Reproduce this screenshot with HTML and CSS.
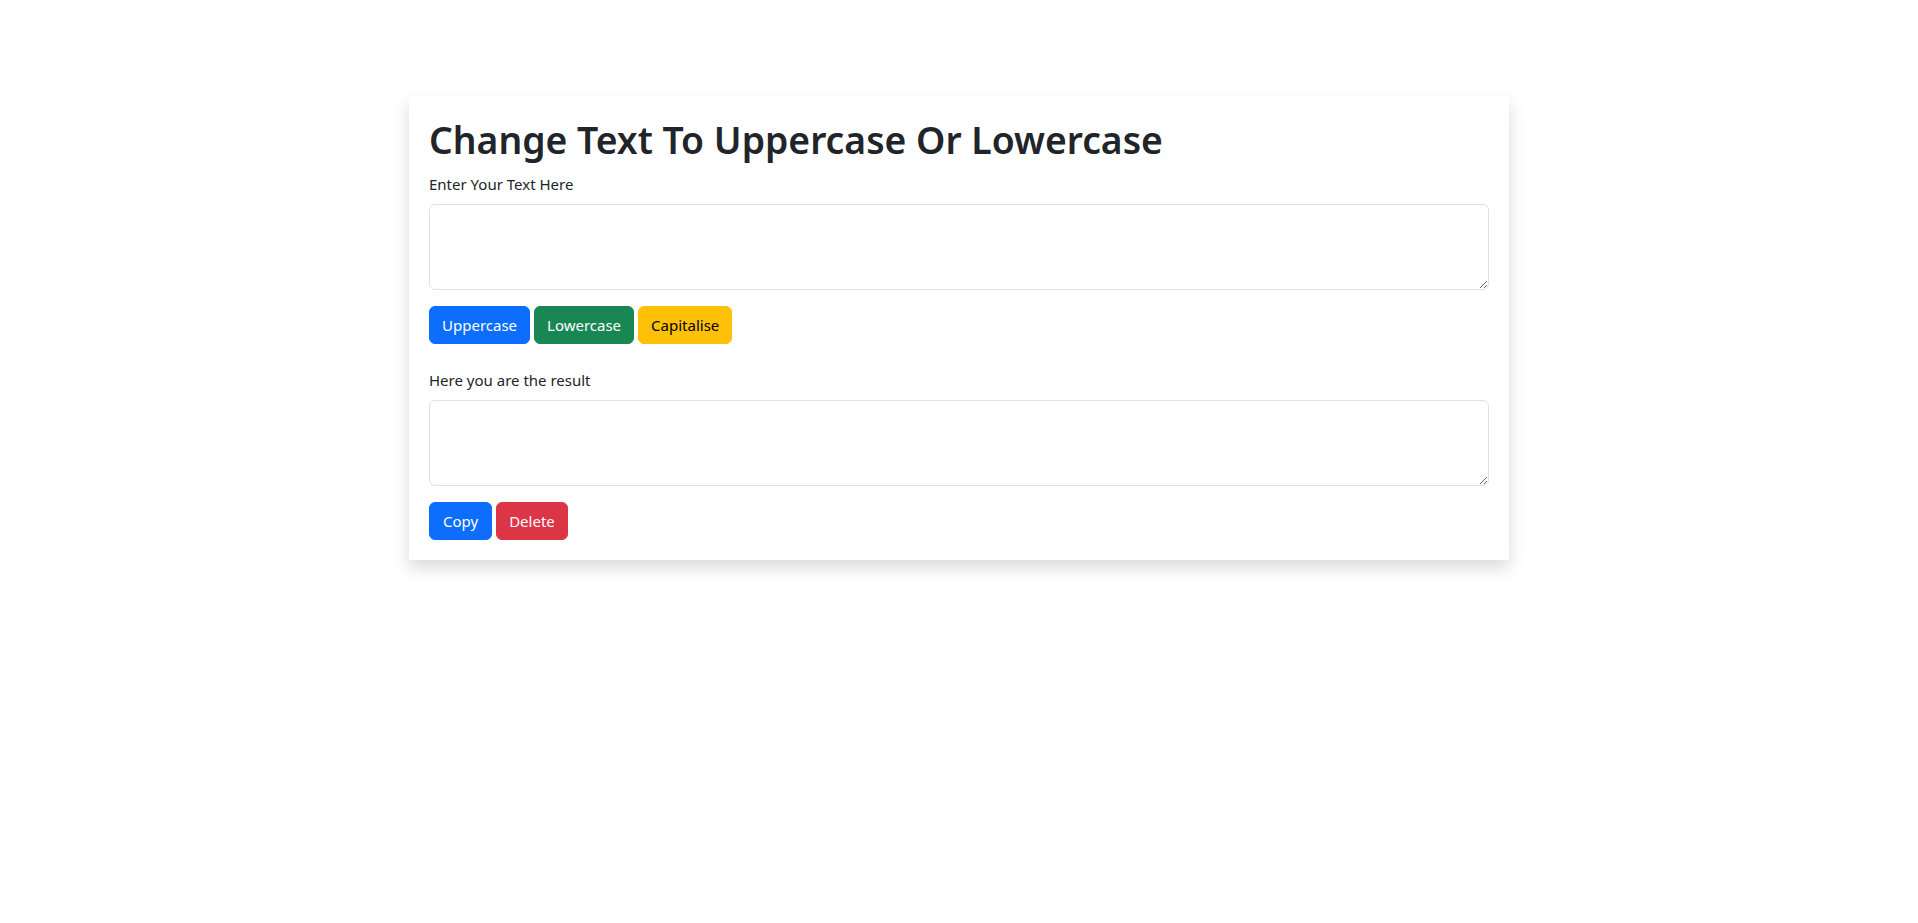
FILE: index.html
```html
<!DOCTYPE html>
<html lang="en">
<head>
<meta charset="utf-8">
<title>Change Text To Uppercase Or Lowercase</title>
<link rel="stylesheet" href="styles.css">
</head>
<body>
<main class="page">
  <section class="card">
    <h1 class="title">Change Text To Uppercase Or Lowercase</h1>
    <label class="label" for="input">Enter Your Text Here</label>
    <textarea id="input" class="field" rows="3"></textarea>
    <div class="actions">
      <button class="btn btn-primary">Uppercase</button>
      <button class="btn btn-success">Lowercase</button>
      <button class="btn btn-warning">Capitalise</button>
    </div>
    <label class="label label-result" for="output">Here you are the result</label>
    <textarea id="output" class="field" rows="3"></textarea>
    <div class="actions">
      <button class="btn btn-primary btn-copy">Copy</button>
      <button class="btn btn-danger">Delete</button>
    </div>
  </section>
</main>
</body>
</html>
```
FILE: styles.css
```css
* { box-sizing: border-box; }
html, body { margin: 0; padding: 0; background: #fff; }
body {
  font-family: "Noto Sans", "Open Sans", sans-serif;
  font-size: 15px;
  line-height: 1.6;
  color: #212529;
  min-height: 100vh;
}
.page {
  display: flex;
  align-items: flex-start;
  justify-content: center;
  padding-top: 96px;
  min-height: 100vh;
}
.card {
  width: 1100px;
  padding: 20px;
  background: #fff;
  box-shadow: 0 8px 16px rgba(0,0,0,0.15);
  display: flex;
  flex-direction: column;
}
.title {
  margin: 0 0 8px;
  font-size: 37.3px;
  font-weight: 600;
  line-height: 48px;
}
.label {
  display: block;
  margin-bottom: 8px;
  font-size: 15px;
  line-height: 24px;
}
.label-result { margin-top: 24px; }
.field {
  display: block;
  width: 100%;
  height: 86px;
  padding: 6px 12px;
  font: inherit;
  color: #212529;
  background: #fff;
  border: 1px solid #dee2e6;
  border-radius: 6px;
  resize: vertical;
  outline: none;
}
.actions {
  display: flex;
  gap: 4px;
  margin-top: 16px;
}
.btn {
  font: inherit;
  font-size: 15px;
  line-height: 24px;
  padding: 6px 12px;
  border: 1px solid transparent;
  border-radius: 6px;
  color: #fff;
  cursor: pointer;
}
.btn-copy { padding: 6px 13px; }
.btn-primary { background: #0d6efd; border-color: #0d6efd; }
.btn-success { background: #198754; border-color: #198754; }
.btn-warning { background: #ffc107; border-color: #ffc107; color: #000; }
.btn-danger { background: #dc3545; border-color: #dc3545; }
```
